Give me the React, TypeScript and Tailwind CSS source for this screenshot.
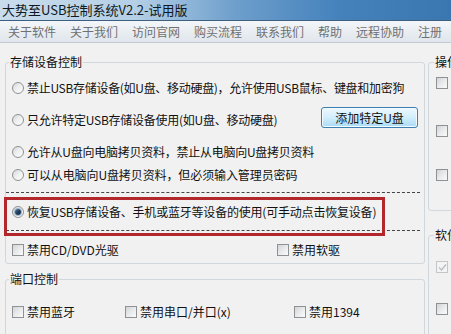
import React from "react";

function Radio({ checked = false }: { checked?: boolean }) {
  return (
    <span className="relative w-[12px] h-[12px] shrink-0 rounded-full border border-[#8e9193] bg-gradient-to-br from-[#d6d8da] via-[#eef0f1] to-[#ffffff] flex items-center justify-center">
      {checked && (
        <span className="w-[6px] h-[6px] rounded-full bg-gradient-to-br from-[#5a7c9c] via-[#1f3e5e] to-[#0f2a44] ring-1 ring-[#9fb6cc]" />
      )}
    </span>
  );
}

function Check({ checked = false, disabled = false }: { checked?: boolean; disabled?: boolean }) {
  return (
    <span
      className={
        "w-[12px] h-[12px] shrink-0 border flex items-center justify-center " +
        (disabled
          ? "border-[#c4c6c8] bg-[#f4f4f4]"
          : "border-[#8f9294] bg-gradient-to-br from-[#d2d4d6] via-[#e9eaeb] to-[#fbfbfb]")
      }
    >
      {checked && (
        <svg width="9" height="9" viewBox="0 0 9 9">
          <path d="M1 4.5 L3.5 7 L8 1.5" fill="none" stroke={disabled ? "#b8bcc0" : "#333"} strokeWidth="1.3" />
        </svg>
      )}
    </span>
  );
}

const menu = ["关于软件", "关于我们", "访问官网", "购买流程", "联系我们", "帮助", "远程协助", "注册"];

export default function App() {
  return (
    <div className="w-[451px] h-[334px] overflow-hidden bg-[#f1f1f1] text-[12px] leading-[16px] text-[#111] font-['Noto_Sans_CJK_SC','Noto_Sans',sans-serif] flex flex-col">
      {/* title bar */}
      <div className="h-[21px] shrink-0 flex items-center pl-[2px] text-[13px] text-[#101820] border-b border-[#3d5f80] bg-[linear-gradient(to_right,#c9dcec_0%,#b4cfe6_30%,#6e9fcc_52%,#4582bc_75%,#3a76b0_100%)]">
        大势至USB控制系统V2.2-试用版
      </div>
      {/* menu bar */}
      <div className="h-[22px] shrink-0 flex items-center gap-[14px] pl-[8px] text-[#707070] border-b border-[#c2cad3] bg-gradient-to-b from-[#f3f6f9] to-[#e0e6ec] whitespace-nowrap">
        {menu.map((m) => (
          <span key={m}>{m}</span>
        ))}
      </div>

      {/* content */}
      <div className="flex items-start">
        {/* left column */}
        <div className="ml-[5px] w-[420px] shrink-0 flex flex-col">
          <fieldset className="mt-[11px] border border-[#d0d7dd] rounded-[3px] pb-[4px]">
            <legend className="ml-[3px] px-[1px]">存储设备控制</legend>
            <div className="mt-[8px] h-[20px] pl-[6px] flex items-center gap-[3px] whitespace-nowrap tracking-[-0.3px]">
              <Radio />
              <span>禁止USB存储设备(如U盘、移动硬盘)，允许使用USB鼠标、键盘和加密狗</span>
            </div>
            <div className="mt-[11px] pl-[6px] pr-[6px] flex items-start whitespace-nowrap">
              <div className="h-[22px] flex items-center gap-[3px] tracking-[-0.25px]">
                <Radio />
                <span>只允许特定USB存储设备使用(如U盘、移动硬盘)</span>
              </div>
              <button className="ml-auto -mt-[2px] w-[97px] h-[21px] rounded-[3px] border border-[#3c7fb1] bg-gradient-to-b from-[#eef8fe] via-[#d2eefc] to-[#a9dbf6] shadow-[inset_0_0_0_1px_#f4fbff] flex items-center justify-center text-[#111]">
                添加特定U盘
              </button>
            </div>
            <div className="mt-[11px] h-[20px] pl-[6px] flex items-center gap-[3px] whitespace-nowrap tracking-[-0.25px]">
              <Radio />
              <span>允许从U盘向电脑拷贝资料，禁止从电脑向U盘拷贝资料</span>
            </div>
            <div className="mt-[3px] h-[20px] pl-[6px] flex items-center gap-[3px] whitespace-nowrap tracking-[-0.1px]">
              <Radio />
              <span>可以从电脑向U盘拷贝资料，但必须输入管理员密码</span>
            </div>
            <div className="relative mt-[7px] mr-[4px] h-[39px] border-y border-dashed border-[#444] pl-[6px] flex items-center gap-[3px] whitespace-nowrap tracking-[-0.2px]">
              <Radio checked />
              <span>恢复USB存储设备、手机或蓝牙等设备的使用(可手动点击恢复设备)</span>
              <div className="absolute left-[-2px] top-[4px] w-[381px] h-[39px] border-[3px] border-[#b2262c] pointer-events-none" />
            </div>
            <div className="mt-[10px] h-[18px] pl-[6px] flex items-center whitespace-nowrap">
              <div className="w-[265px] flex items-center gap-[3px]">
                <Check />
                <span>禁用CD/DVD光驱</span>
              </div>
              <div className="flex items-center gap-[3px]">
                <Check />
                <span>禁用软驱</span>
              </div>
            </div>
          </fieldset>

          <fieldset className="mt-[7px] border border-[#d0d7dd] rounded-[3px] pb-[20px]">
            <legend className="ml-[3px] px-[1px]">端口控制</legend>
            <div className="mt-[16px] h-[18px] pl-[6px] flex items-center whitespace-nowrap">
              <div className="w-[113px] flex items-center gap-[3px]">
                <Check />
                <span>禁用蓝牙</span>
              </div>
              <div className="w-[169px] flex items-center gap-[3px]">
                <Check />
                <span>禁用串口/并口(x)</span>
              </div>
              <div className="flex items-center gap-[3px]">
                <Check />
                <span>禁用1394</span>
              </div>
            </div>
          </fieldset>
        </div>

        {/* right column */}
        <div className="ml-[3px] w-[200px] shrink-0 flex flex-col">
          <fieldset className="mt-[11px] border border-[#d0d7dd] rounded-[3px] pb-[29px]">
            <legend className="ml-[5px] px-[1px] whitespace-nowrap">操作</legend>
            <div className="mt-[7px] pl-[7px] flex items-center">
              <Check />
            </div>
            <div className="mt-[36px] pl-[7px] flex items-center">
              <Check />
            </div>
            <div className="mt-[32px] pl-[7px] flex items-center">
              <Check />
            </div>
          </fieldset>
          <fieldset className="mt-[16px] border border-[#d0d7dd] rounded-[3px] pb-[20px]">
            <legend className="ml-[5px] px-[1px] whitespace-nowrap">软件</legend>
            <div className="mt-[18px] pl-[7px] flex items-center">
              <Check checked disabled />
            </div>
            <div className="mt-[30px] pl-[7px] flex items-center">
              <Check />
            </div>
          </fieldset>
        </div>
      </div>
    </div>
  );
}
